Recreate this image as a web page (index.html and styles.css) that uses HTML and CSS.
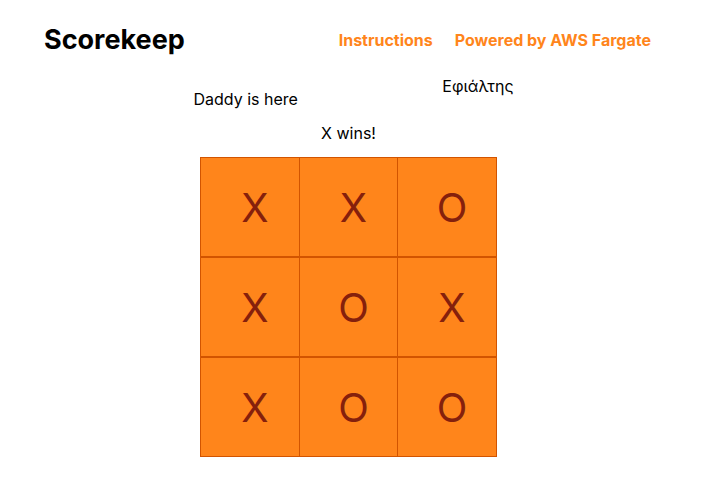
FILE: index.html
```html
<!DOCTYPE html>
<html lang="en">
<head>
<meta charset="utf-8">
<title>Scorekeep</title>
<link rel="stylesheet" href="styles.css">
</head>
<body>
<header class="header">
  <h1 class="brand">Scorekeep</h1>
  <nav class="nav">
    <a href="#instructions">Instructions</a>
    <a href="#fargate">Powered by AWS Fargate</a>
  </nav>
</header>
<main class="game">
  <div class="players">
    <p class="session">Daddy is here</p>
    <p class="player" lang="el">Εφιάλτης</p>
  </div>
  <p class="status">X wins!</p>
  <div class="board">
    <button class="cell">X</button>
    <button class="cell">X</button>
    <button class="cell">O</button>
    <button class="cell">X</button>
    <button class="cell">O</button>
    <button class="cell">X</button>
    <button class="cell">X</button>
    <button class="cell">O</button>
    <button class="cell">O</button>
  </div>
</main>
</body>
</html>
```
FILE: styles.css
```css
* {
  box-sizing: border-box;
}

body {
  margin: 0;
  background: #fff;
  color: #000;
  font-family: Inter, "Noto Sans", sans-serif;
  font-size: 16px;
  line-height: 20px;
}

h1,
p {
  margin: 0;
}

.header {
  display: flex;
  align-items: center;
  justify-content: space-between;
  padding: 20px 64px 16px 44px;
}

.brand {
  font-size: 27px;
  line-height: 40px;
  font-weight: 700;
}

.nav {
  display: flex;
  gap: 22px;
}

.nav a {
  color: #ff851b;
  font-weight: 700;
  text-decoration: none;
}

.game {
  display: flex;
  flex-direction: column;
  align-items: center;
  padding-right: 18px;
}

.players {
  display: flex;
  justify-content: space-between;
  width: 320px;
  margin-left: 10px;
}

.session {
  padding-top: 13px;
}

.status {
  margin: 14px 0;
}

.board {
  display: grid;
  grid-template-columns: 99px 98px 99px;
  grid-auto-rows: 100px;
  padding-right: 1px;
}

.cell {
  margin: 0 -1px 0 0;
  padding: 2px 0 0 10px;
  border: 1px solid #d25400;
  background: #ff851b;
  color: #85200c;
  font-family: inherit;
  font-size: 40px;
  line-height: 48px;
}
```
